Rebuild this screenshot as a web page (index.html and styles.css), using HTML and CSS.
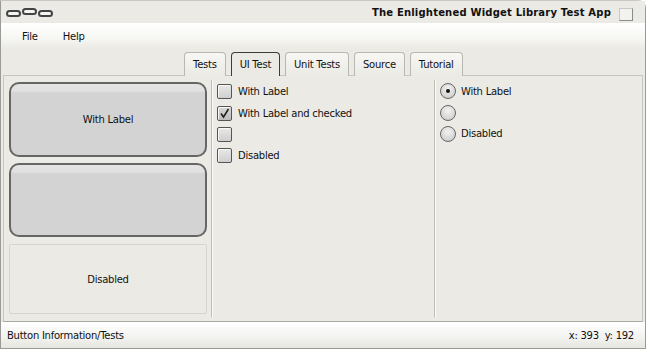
FILE: index.html
```
<!DOCTYPE html>
<html>
<head>
<meta charset="utf-8">
<link rel="stylesheet" href="styles.css">
</head>
<body>
<div class="window">
  <div class="titlebar">
    <div class="pills"><span class="pill"></span><span class="pill up"></span><span class="pill"></span></div>
    <div class="title">The Enlightened Widget Library Test App</div>
    <div class="closebox"></div>
  </div>
  <div class="menubar">
    <span class="menu file">File</span>
    <span class="menu">Help</span>
  </div>
  <div class="tabs">
    <div class="tab">Tests</div>
    <div class="tab active">UI Test</div>
    <div class="tab">Unit Tests</div>
    <div class="tab">Source</div>
    <div class="tab">Tutorial</div>
  </div>
  <div class="panel">
    <div class="col buttons">
      <div class="btn">With Label</div>
      <div class="btn"></div>
      <div class="btn disabled">Disabled</div>
    </div>
    <div class="sep"></div>
    <div class="col checks">
      <div class="row first"><span class="cb"></span><span>With Label</span></div>
      <div class="row"><span class="cb checked"><svg width="11" height="11" viewBox="0 0 11 11"><path d="M2 5.5 L4.5 9 L9.5 1" fill="none" stroke="#222" stroke-width="1.6"/></svg></span><span>With Label and checked</span></div>
      <div class="row"><span class="cb"></span></div>
      <div class="row"><span class="cb"></span><span>Disabled</span></div>
    </div>
    <div class="sep"></div>
    <div class="col radios">
      <div class="row first"><span class="rb on"></span><span>With Label</span></div>
      <div class="row"><span class="rb"></span></div>
      <div class="row"><span class="rb"></span><span>Disabled</span></div>
    </div>
  </div>
  <div class="statusbar">
    <span>Button Information/Tests</span>
    <span>x: 393&nbsp; y: 192</span>
  </div>
</div>
</body>
</html>
```
FILE: styles.css
```
* { box-sizing: border-box; }
html, body { margin: 0; padding: 0; }
body {
  width: 646px; height: 349px; overflow: hidden;
  font-family: "DejaVu Sans", sans-serif; font-size: 10px; letter-spacing: -0.25px; color: #111;
  background: #ffffff;
}
.window {
  width: 646px; height: 349px;
  background: #ebeae4;
  border: 1px solid #9a9a96;
  border-top-color: #c9c8c2;
  border-radius: 0 8px 0 0;
  display: flex; flex-direction: column;
}
.titlebar {
  height: 22px; flex: none;
  display: flex; align-items: center;
  padding: 0 12px 0 5px;
  background: #ebeae4;
}
.pills { display: flex; gap: 1px; align-items: center; }
.pill {
  width: 15px; height: 7px; border: 2px solid #444; border-radius: 4px;
  background: #f4f4f2; margin-top: 2px;
}
.pill.up { margin-top: -1px; }
.title {
  flex: 1; text-align: right; font-weight: bold; font-size: 10px;
  letter-spacing: 0.2px; padding-right: 8px; color: #111;
}
.closebox {
  width: 14px; height: 13px; margin-top: 5px;
  background: #f2f2ef;
  border: 1px solid #c8c8c4; border-right-color: #8a8a86; border-bottom-color: #8a8a86;
}
.menubar {
  height: 26px; flex: none;
  display: flex; align-items: center; gap: 25px;
  padding-left: 21px;
  background: linear-gradient(#ffffff, #f6f6f3 60%, #ebeae4);
}
.tabs {
  height: 26px; flex: none;
  display: flex; align-items: flex-end; gap: 5px;
  padding-left: 183px; padding-top: 2px;
}
.tab {
  height: 24px; padding: 0 8px;
  display: flex; align-items: center;
  border: 1px solid #b8b7b0; border-bottom: none;
  border-radius: 4px 4px 0 0;
  background: linear-gradient(#f7f7f5, #ebeae4);
  margin-bottom: -1px; position: relative; z-index: 1;
}
.tab.active { border-color: #3c3c3a; background: #ebeae4; }
.panel {
  flex: none; height: 247px;
  margin: 0 2px 0 2px;
  border: 1px solid #c7c6bf; border-bottom-color: #a9a8a2;
  display: flex;
  padding: 6px 3px 4px 5px;
}
.col { display: flex; flex-direction: column; }
.buttons { width: 198px; gap: 6px; }
.btn {
  height: 75px;
  border: 2px solid #666664; border-radius: 10px;
  background: linear-gradient(#e4e4e4 0, #e0e0e0 7px, #d3d3d3 9px, #d3d3d3 100%);
  display: flex; align-items: center; justify-content: center;
}
.btn + .btn { height: 74px; }
.btn.disabled {
  height: 70px; margin-top: 1px;
  border: 1px solid #d6d5ce; border-radius: 2px;
  background: #ebeae4;
}
.sep {
  width: 2px; margin: -2px 4px 0 4px;
  border-left: 1px solid #bdbcb5; border-right: 1px solid #fbfbf9;
}
.checks { width: 213px; margin-top: -2px; }
.radios { flex: 1; margin-top: -2px; }
.row { display: flex; align-items: center; gap: 6px; height: 21px; }
.row.first { height: 23px; }
.radios .row.first { height: 22px; }
.cb {
  width: 15px; height: 15px; flex: none;
  border: 1px solid #555; border-radius: 2px;
  background: linear-gradient(#e8e8e8, #cfcfcf);
  box-shadow: inset 1px 1px 0 #f8f8f8;
  display: flex; align-items: center; justify-content: center;
}
.cb.checked { background: linear-gradient(#d8d8d8, #bcbcbc); }
.rb {
  width: 16px; height: 16px; flex: none;
  border: 1px solid #666; border-radius: 50%;
  background: radial-gradient(circle at 50% 35%, #f2f2f2, #cfcfcf 80%);
  display: flex; align-items: center; justify-content: center;
}
.rb.on::after {
  content: ""; width: 4px; height: 4px; border-radius: 50%; background: #111;
}
.radios .row { gap: 5px; }
.statusbar {
  flex: 1;
  display: flex; justify-content: space-between; align-items: center;
  padding: 0 11px 0 6px;
  background: linear-gradient(#ffffff, #f2f2ef 60%, #e6e5df);
}
```
